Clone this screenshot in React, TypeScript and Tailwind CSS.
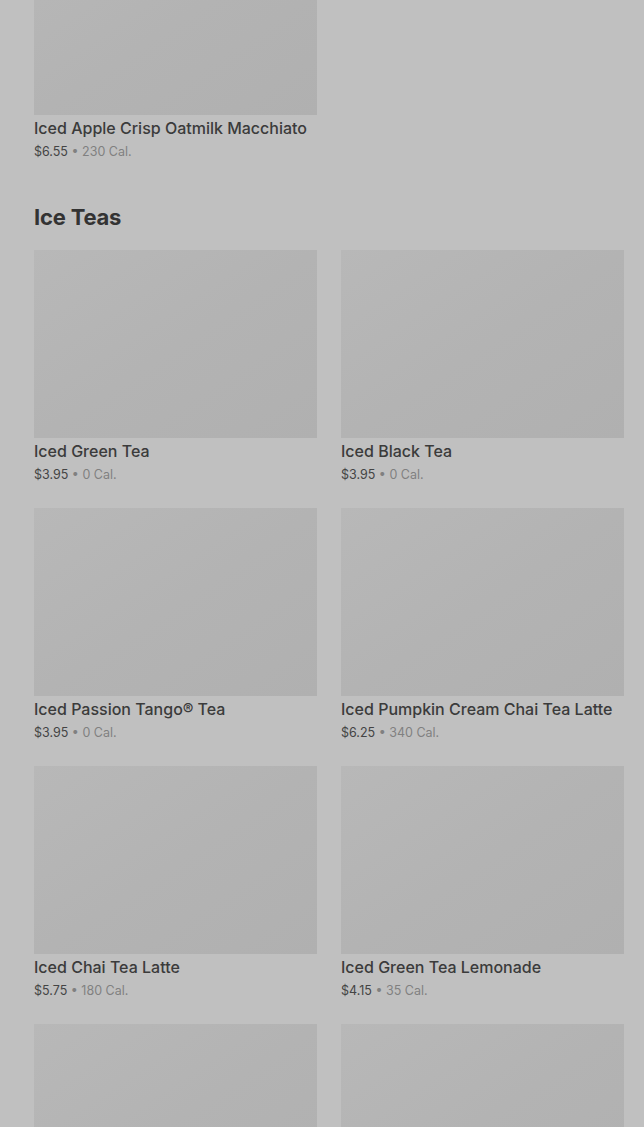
import React from "react";

type Item = { name: string; price: string; cal: string };

const teas: Item[] = [
  { name: "Iced Green Tea", price: "$3.95", cal: "0 Cal." },
  { name: "Iced Black Tea", price: "$3.95", cal: "0 Cal." },
  { name: "Iced Passion Tango® Tea", price: "$3.95", cal: "0 Cal." },
  { name: "Iced Pumpkin Cream Chai Tea Latte", price: "$6.25", cal: "340 Cal." },
  { name: "Iced Chai Tea Latte", price: "$5.75", cal: "180 Cal." },
  { name: "Iced Green Tea Lemonade", price: "$4.15", cal: "35 Cal." },
];

function Thumb() {
  return <div className="h-[188px] w-full bg-gradient-to-br from-[#b8b8b8] via-[#b3b3b3] to-[#b0b0b0]" />;
}

function Card({ item }: { item: Item }) {
  return (
    <div className="flex flex-col">
      <Thumb />
      <div className="mt-[2px] text-[16px] leading-[22px] font-medium text-[#3b3b3b] whitespace-nowrap">
        {item.name}
      </div>
      <div className="mt-[3px] text-[12.5px] leading-[19px] whitespace-nowrap">
        <span className="text-[#444444]">{item.price}</span>
        <span className="text-[#808080]"> • {item.cal}</span>
      </div>
    </div>
  );
}

export default function App() {
  return (
    <div
      className="h-[1127px] overflow-hidden bg-[#c0c0c0] pl-[34px] pr-[20px]"
      style={{ fontFamily: "Inter, 'Noto Sans', sans-serif" }}
    >
      <div className="-mt-[73px] grid grid-cols-2 gap-x-[24px]">
        <Card item={{ name: "Iced Apple Crisp Oatmilk Macchiato", price: "$6.55", cal: "230 Cal." }} />
      </div>
      <h2 className="mt-[40px] mb-[17px] text-[22px] leading-[32px] font-bold text-[#333333] tracking-[-0.2px]">
        Ice Teas
      </h2>
      <div className="grid grid-cols-2 gap-x-[24px] gap-y-[24px]">
        {teas.map((t) => (
          <Card key={t.name} item={t} />
        ))}
        <Thumb />
        <Thumb />
      </div>
    </div>
  );
}
